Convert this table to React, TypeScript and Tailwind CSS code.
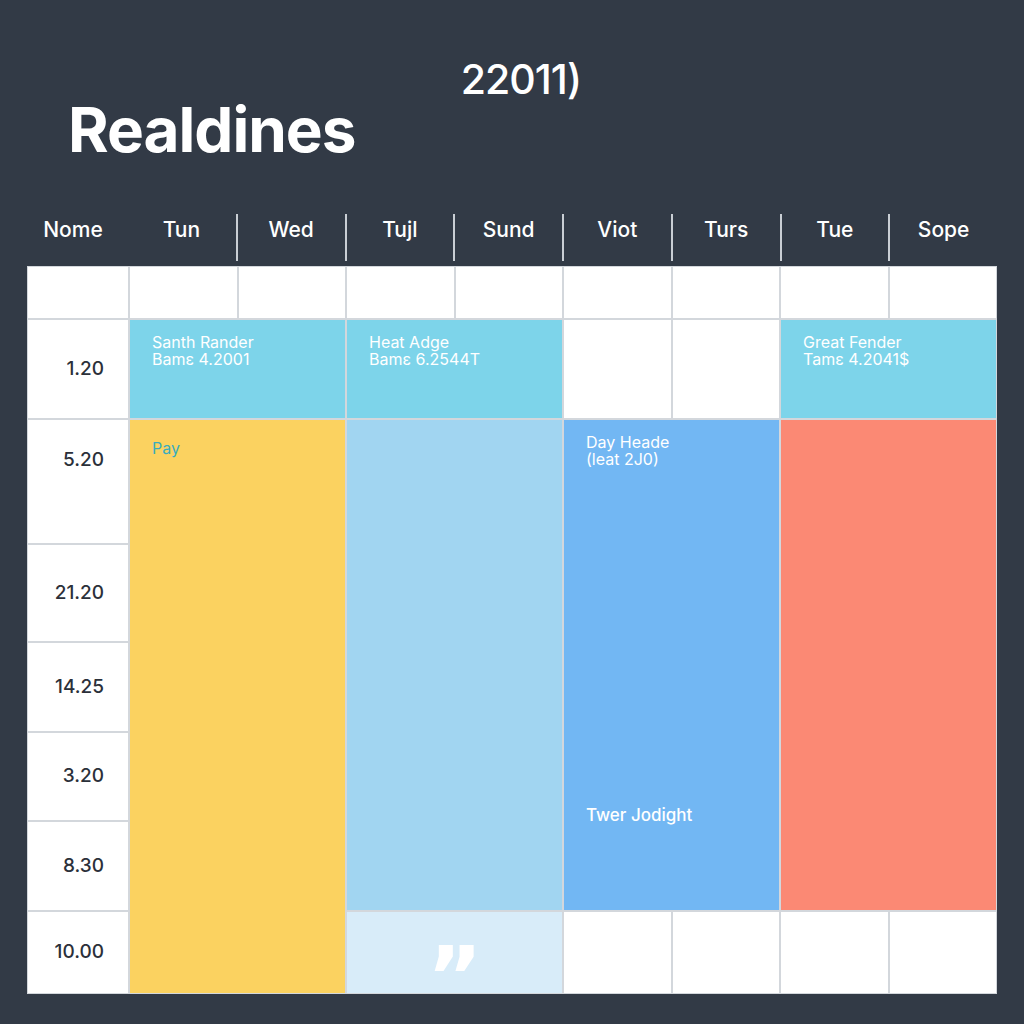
const days = ["Tun", "Wed", "Tujl", "Sund", "Viot", "Turs", "Tue", "Sope"];

const times: { label: string; row: string; top?: boolean }[] = [
  { label: "1.20", row: "row-start-2" },
  { label: "5.20", row: "row-start-3", top: true },
  { label: "21.20", row: "row-start-4" },
  { label: "14.25", row: "row-start-5" },
  { label: "3.20", row: "row-start-6" },
  { label: "8.30", row: "row-start-7" },
  { label: "10.00", row: "row-start-8" },
];

const firstRow = [
  "col-start-2",
  "col-start-3",
  "col-start-4",
  "col-start-5",
  "col-start-6",
  "col-start-7",
  "col-start-8",
  "col-start-9",
];

function EventText({ title, sub }: { title: string; sub: string }) {
  return (
    <div className="pl-[22px] pt-[14px] text-[16px] leading-[17px] text-white">
      <div>{title}</div>
      <div>{sub}</div>
    </div>
  );
}

export default function App() {
  return (
    <div
      className="w-[1024px] h-[1024px] bg-[#323a46] overflow-hidden"
      style={{ fontFamily: "Inter, 'Noto Sans', sans-serif" }}
    >
      <div className="pt-[59px] flex justify-center pl-[18px]">
        <span className="text-[41px] leading-none font-medium text-white tracking-[-1px]">
          22011)
        </span>
      </div>
      <h1 className="pl-[68px] text-[62px] leading-none font-bold text-white tracking-[-1px] mt-[-1px]">
        Realdines
      </h1>

      <div className="mx-[27px] mt-[53px] grid grid-cols-[100px_repeat(8,1fr)]">
        <div className="h-[47px] flex items-start justify-center pt-[3px] text-[21px] leading-[26px] font-medium text-white pr-[8px]">
          Nome
        </div>
        {days.map((d, i) => (
          <div
            key={d}
            className={`h-[47px] flex items-start justify-center pt-[3px] text-[21px] leading-[26px] font-medium text-white ${
              i > 0 ? "border-l-2 border-[#c9ced4]" : ""
            }`}
          >
            {d}
          </div>
        ))}
      </div>

      <div className="mx-[27px] mt-[5px] grid grid-cols-[100px_repeat(8,1fr)] grid-rows-[51px_98px_123px_96px_88px_87px_88px_81px] gap-[2px] bg-[#d3d7dc] border border-[#d3d7dc]">
        <div className="col-start-1 row-start-1 bg-white" />
        {firstRow.map((c) => (
          <div key={c} className={`${c} row-start-1 bg-white`} />
        ))}

        {times.map((t) => (
          <div
            key={t.label}
            className={`col-start-1 ${t.row} bg-white flex justify-end pr-[24px] text-[19px] font-medium text-[#2b303a] ${
              t.top ? "items-start pt-[26px]" : "items-center"
            }`}
          >
            {t.label}
          </div>
        ))}

        <div className="col-start-2 col-span-2 row-start-2 bg-[#7dd4ea]">
          <EventText title="Santh Rander" sub="Bamε 4.2001" />
        </div>
        <div className="col-start-4 col-span-2 row-start-2 bg-[#7dd4ea]">
          <EventText title="Heat Adge" sub="Bamε 6.2544T" />
        </div>
        <div className="col-start-6 row-start-2 bg-white" />
        <div className="col-start-7 row-start-2 bg-white" />
        <div className="col-start-8 col-span-2 row-start-2 bg-[#7dd4ea]">
          <EventText title="Great Fender" sub="Tamε 4.2041$" />
        </div>

        <div className="col-start-2 col-span-2 row-start-3 row-span-6 bg-[#fbd260]">
          <div className="pl-[22px] pt-[18px] text-[16px] leading-[20px] text-[#3aacbd]">
            Pay
          </div>
        </div>
        <div className="col-start-4 col-span-2 row-start-3 row-span-5 bg-[#a1d5f1]" />
        <div className="col-start-4 col-span-2 row-start-8 bg-[#d8ecf9] flex items-center justify-center">
          <span
            className="block h-[36px] text-[84px] leading-[84px] font-bold text-white overflow-visible"
            style={{ fontFamily: "'DejaVu Sans', sans-serif" }}
          >
            ”
          </span>
        </div>
        <div className="col-start-6 col-span-2 row-start-3 row-span-5 bg-[#72b7f3] flex flex-col">
          <EventText title="Day Heade" sub="(leat 2J0)" />
          <div className="mt-auto mb-[85px] pl-[22px] text-[17px] leading-[20px] font-medium text-white">
            Twer Jodight
          </div>
        </div>
        <div className="col-start-8 col-span-2 row-start-3 row-span-5 bg-[#fb8974]" />

        <div className="col-start-6 row-start-8 bg-white" />
        <div className="col-start-7 row-start-8 bg-white" />
        <div className="col-start-8 row-start-8 bg-white" />
        <div className="col-start-9 row-start-8 bg-white" />
      </div>
    </div>
  );
}
